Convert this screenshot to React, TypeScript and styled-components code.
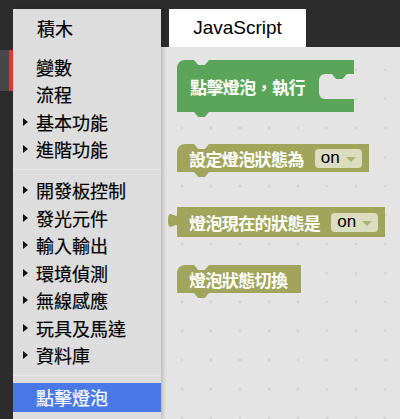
import React from "react";
import styled, { createGlobalStyle } from "styled-components";

const GREEN = "#5ba55b";
const OLIVE = "#a0a55b";
const CANVAS = "#e4e4e4";

const GlobalStyle = createGlobalStyle`
  html, body {
    margin: 0;
    padding: 0;
    background: #2c2c2c;
  }
  * {
    box-sizing: border-box;
  }
`;

type Category = { label: string; nested?: boolean };

const groups: Category[][] = [
  [
    { label: "變數" },
    { label: "流程" },
    { label: "基本功能", nested: true },
    { label: "進階功能", nested: true },
  ],
  [
    { label: "開發板控制", nested: true },
    { label: "發光元件", nested: true },
    { label: "輸入輸出", nested: true },
    { label: "環境偵測", nested: true },
    { label: "無線感應", nested: true },
    { label: "玩具及馬達", nested: true },
    { label: "資料庫", nested: true },
  ],
];

export default function App() {
  return (
    <>
      <GlobalStyle />
      <Page>
        <Rail>
          <RailMark />
        </Rail>
        <Toolbox>
          <ToolboxTitle>
            <Twisty />
            積木
          </ToolboxTitle>
          <CategoryList>
            {groups.map((group, i) => (
              <React.Fragment key={i}>
                {group.map((cat) => (
                  <CategoryRow key={cat.label}>
                    <Twisty>{cat.nested && <Arrow />}</Twisty>
                    {cat.label}
                  </CategoryRow>
                ))}
                <Separator />
              </React.Fragment>
            ))}
            <CategoryRow $selected>
              <Twisty />
              點擊燈泡
            </CategoryRow>
          </CategoryList>
        </Toolbox>
        <Main>
          <TabBar>
            <Tab>JavaScript</Tab>
          </TabBar>
          <Workspace>
            <CBlock>
              <CLabel>點擊燈泡，執行</CLabel>
              <CArm>
                <CArmTop />
                <CMouth />
                <CArmBottom />
              </CArm>
            </CBlock>

            <StackBlock $color={OLIVE} $gap={32} $padRight={7}>
              設定燈泡狀態為
              <Dropdown>
                on
                <DropArrow $color={OLIVE} />
              </Dropdown>
            </StackBlock>

            <ValueRow>
              <svg width="9" height="30" viewBox="0 0 9 30">
                <path d="M9.5,6 c0,9 -9.5,-7 -9.5,7.5 s9.5,-1.5 9.5,7.5 Z" fill={OLIVE} />
              </svg>
              <ValueBody>
                燈泡現在的狀態是
                <Dropdown>
                  on
                  <DropArrow $color={OLIVE} />
                </Dropdown>
              </ValueBody>
            </ValueRow>

            <StackBlock $color={OLIVE} $gap={28} $padRight={14}>
              燈泡狀態切換
            </StackBlock>
          </Workspace>
        </Main>
      </Page>
    </>
  );
}

const Page = styled.div`
  display: flex;
  width: 400px;
  height: 419px;
  overflow: hidden;
  background: #2c2c2c;
  font-family: "Noto Sans CJK TC", "Noto Sans", sans-serif;
`;

const Rail = styled.div`
  width: 13px;
  flex-shrink: 0;
  padding-top: 50px;
`;

const RailMark = styled.div`
  height: 41px;
  background: linear-gradient(to right, #474747 0 9px, #e8352b 9px 13px);
`;

const Toolbox = styled.div`
  position: relative;
  z-index: 1;
  width: 148px;
  flex-shrink: 0;
  margin-top: 9px;
  background: #dddddd;
  display: flex;
  flex-direction: column;
  box-shadow: 2px 0 4px rgba(0, 0, 0, 0.18);
  -webkit-text-stroke: 0.2px currentColor;
`;

const ToolboxTitle = styled.div`
  display: flex;
  align-items: center;
  height: 38px;
  padding-left: 11px;
  font-size: 18px;
  color: #000;
`;

const CategoryList = styled.div`
  display: flex;
  flex-direction: column;
  padding-top: 6px;
`;

const CategoryRow = styled.div<{ $selected?: boolean }>`
  display: flex;
  align-items: center;
  height: ${(p) => (p.$selected ? "29px" : "27.5px")};
  padding-left: 10px;
  font-size: 18px;
  color: ${(p) => (p.$selected ? "#fff" : "#000")};
  background: ${(p) => (p.$selected ? "#4a78e6" : "transparent")};
  white-space: nowrap;
`;

const Twisty = styled.span`
  display: flex;
  align-items: center;
  flex-shrink: 0;
  width: 13px;
  height: 100%;
`;

const Arrow = styled.span`
  width: 0;
  height: 0;
  border-left: 5px solid #111;
  border-top: 4px solid transparent;
  border-bottom: 4px solid transparent;
`;

const Separator = styled.div`
  height: 13.5px;
  padding-top: 6px;
  &::after {
    content: "";
    display: block;
    height: 1px;
    background: #e8e8e8;
  }
`;

const Main = styled.div`
  flex: 1;
  display: flex;
  flex-direction: column;
  min-width: 0;
`;

const TabBar = styled.div`
  height: 47px;
  flex-shrink: 0;
  padding: 9px 0 0 8px;
  display: flex;
`;

const Tab = styled.div`
  width: 137px;
  height: 38px;
  background: #fff;
  display: flex;
  align-items: center;
  justify-content: center;
  font-family: "Liberation Sans", Arial, sans-serif;
  font-size: 19px;
  color: #000;
`;

const Workspace = styled.div`
  flex: 1;
  display: flex;
  flex-direction: column;
  align-items: flex-start;
  padding: 13px 0 0 16px;
  background-color: ${CANVAS};
  background-image: radial-gradient(circle, #c9c9c9 0.9px, transparent 1.3px);
  background-size: 29px 29px;
  background-position: 6.5px 8.5px;
`;

const notch = `
  content: "";
  position: absolute;
  left: 17px;
  width: 15px;
  height: 5px;
  clip-path: polygon(0 0, 100% 0, 72% 100%, 28% 100%);
`;

const blockText = `
  color: #fff;
  font-family: "Noto Sans CJK TC", "Noto Sans", sans-serif;
  font-size: 17px;
  letter-spacing: -0.6px;
  font-weight: 700;
  white-space: nowrap;
`;

const CBlock = styled.div`
  position: relative;
  display: flex;
  height: 52px;
  &::before {
    ${notch}
    top: 0;
    background: ${CANVAS};
  }
  &::after {
    ${notch}
    bottom: -5px;
    background: ${GREEN};
  }
`;

const CLabel = styled.div`
  ${blockText}
  display: flex;
  align-items: center;
  padding: 0 14px 0 13px;
  background: ${GREEN};
  border-top-left-radius: 8px;
`;

const CArm = styled.div`
  width: 35px;
  display: flex;
  flex-direction: column;
  background: ${GREEN};
`;

const CArmTop = styled.div`
  height: 14px;
`;

const CMouth = styled.div`
  position: relative;
  height: 25px;
  background: ${CANVAS};
  border-radius: 6px 0 0 6px;
  &::before {
    ${notch}
    top: 0;
    left: 13px;
    background: ${GREEN};
  }
`;

const CArmBottom = styled.div`
  height: 13px;
`;

const StackBlock = styled.div<{ $color: string; $gap: number; $padRight: number }>`
  ${blockText}
  position: relative;
  display: flex;
  align-items: center;
  gap: 11px;
  height: 28px;
  margin-top: ${(p) => p.$gap}px;
  padding: 0 ${(p) => p.$padRight}px 0 12px;
  background: ${(p) => p.$color};
  border-top-left-radius: 8px;
  &::before {
    ${notch}
    top: 0;
    background: ${CANVAS};
  }
  &::after {
    ${notch}
    bottom: -5px;
    background: ${(p) => p.$color};
  }
`;

const ValueRow = styled.div`
  display: flex;
  align-items: flex-start;
  margin: 35px 0 0 -9px;
`;

const ValueBody = styled.div`
  ${blockText}
  display: flex;
  align-items: center;
  gap: 11px;
  height: 30px;
  padding: 0 7px 0 12px;
  background: ${OLIVE};
`;

const Dropdown = styled.div`
  display: flex;
  align-items: center;
  gap: 6px;
  height: 19px;
  padding: 0 6px;
  border-radius: 4px;
  background: rgba(255, 255, 255, 0.62);
  color: #000;
  font-family: "Liberation Sans", Arial, sans-serif;
  font-size: 17px;
  letter-spacing: 0;
  font-weight: 400;
`;

const DropArrow = styled.span<{ $color: string }>`
  width: 0;
  height: 0;
  margin-top: 2px;
  border-top: 5px solid ${(p) => p.$color};
  border-left: 5px solid transparent;
  border-right: 5px solid transparent;
  opacity: 0.75;
`;
